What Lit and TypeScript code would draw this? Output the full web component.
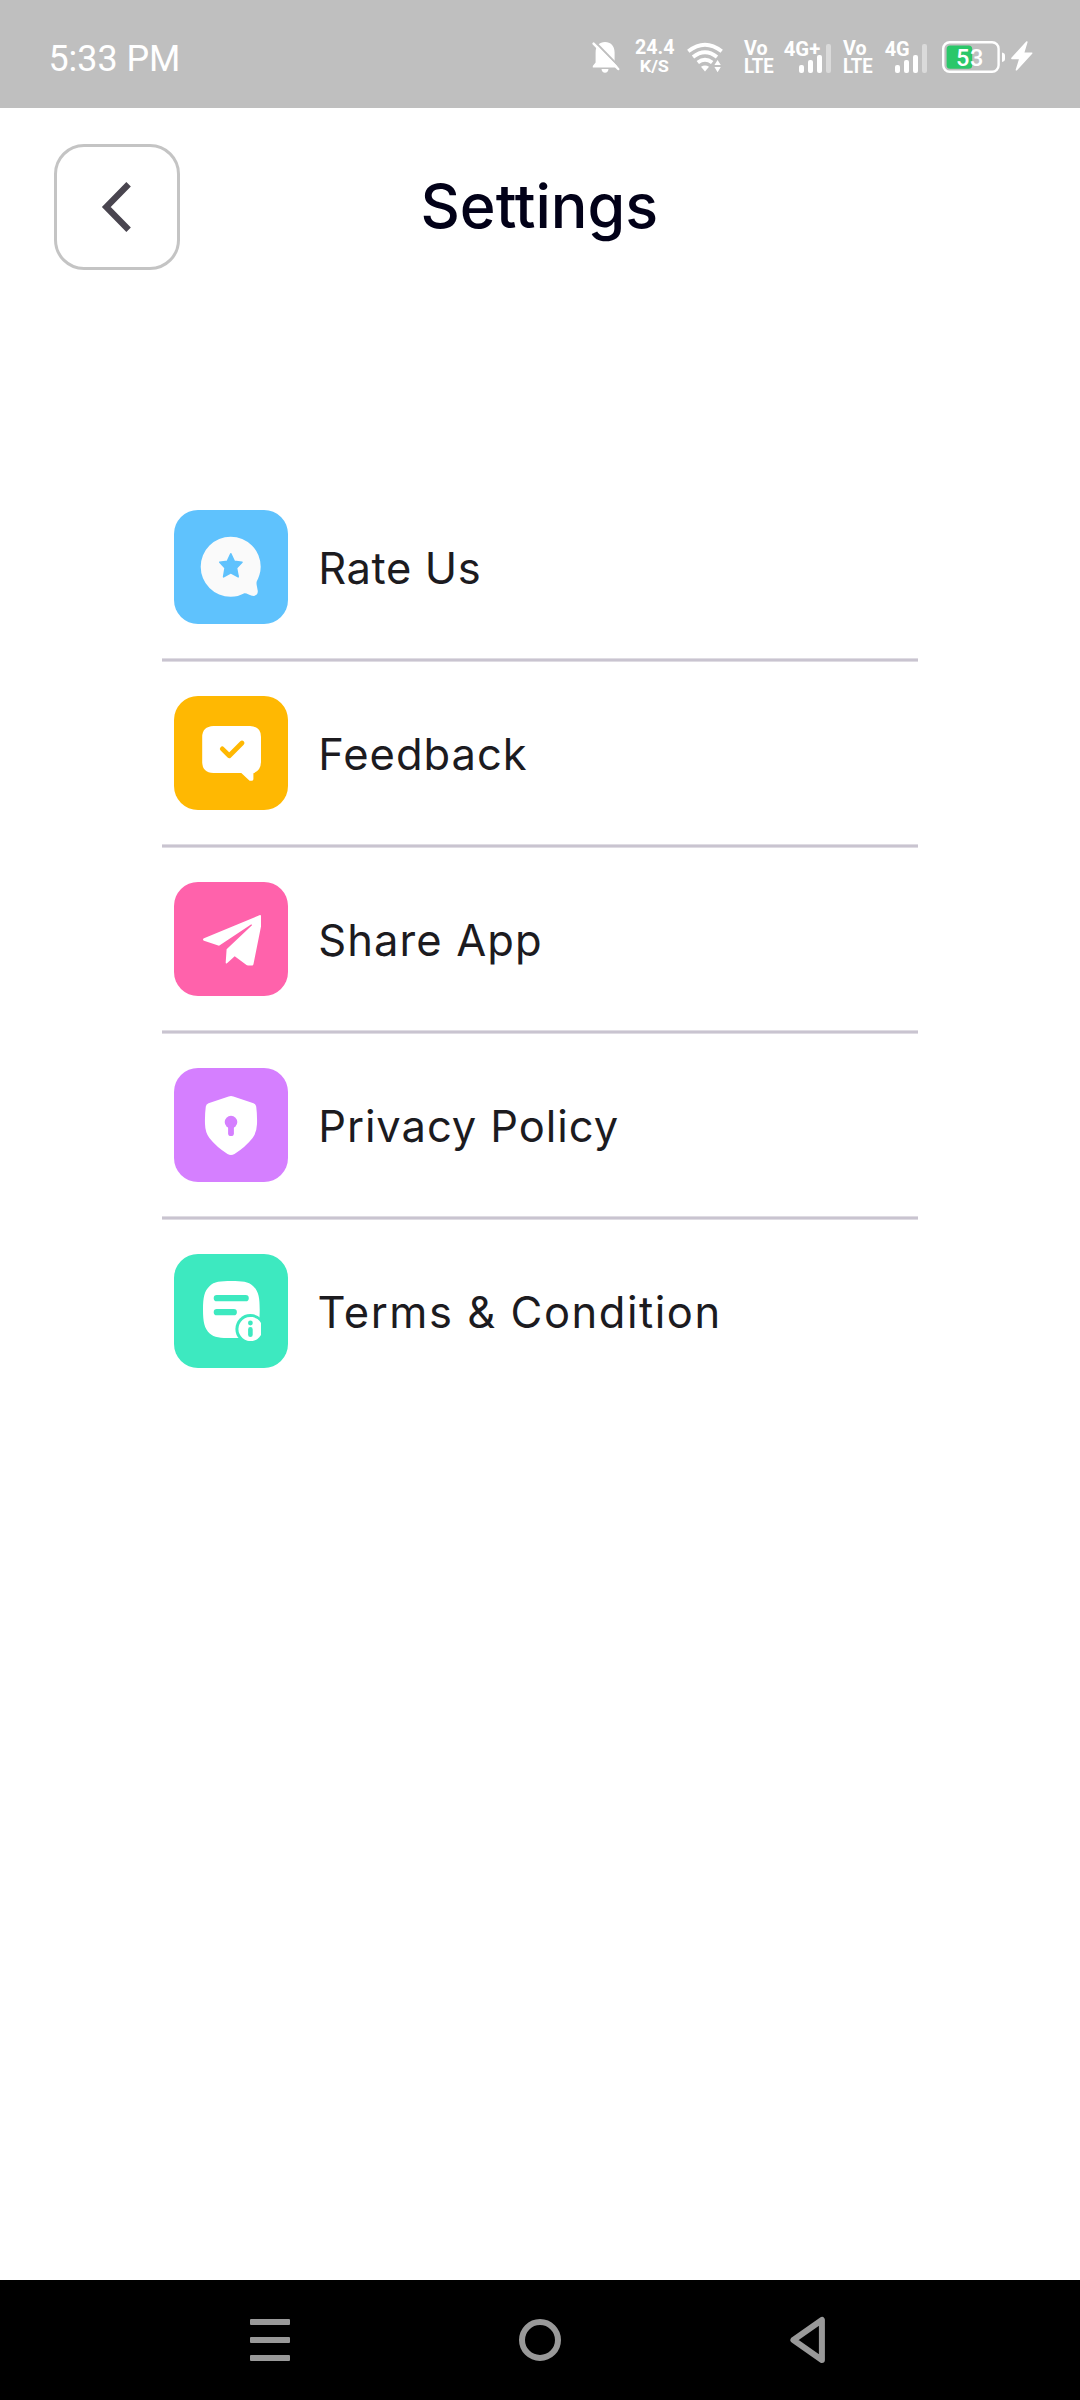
import { LitElement, html, svg, css } from "lit";
import { customElement } from "lit/decorators.js";

/* Signal strength glyph: three filled bars and one faded bar. */
const bars = (x: number) => svg`
  <rect x=${x} y="65" width="5" height="8" rx="2"/>
  <rect x=${x + 9} y="60" width="5" height="13" rx="2"/>
  <rect x=${x + 18} y="55" width="5" height="18" rx="2"/>
  <rect x=${x + 27} y="44" width="5" height="29" rx="2" fill="#dadada"/>`;

@customElement("status-bar")
class StatusBar extends LitElement {
  static styles = css`
    :host { display: flex; height: 108px; background: #bfbfbf; justify-content: space-between;
      padding: 0 40px 0 48px; box-sizing: border-box; }
    svg { display: block; height: 108px; fill: #fff; font-family: Roboto, sans-serif; }
    .icons { display: flex; }
  `;
  render() {
    return html`
      <svg width="140" viewBox="48 0 140 108">
        <text x="48.4" y="71" font-size="36" textLength="132" lengthAdjust="spacingAndGlyphs">5:33 PM</text>
      </svg>
      <div class="icons">
        <svg width="40" viewBox="590 0 40 108">
          <path d="M592.8 67.6V66L595.6 62.6V52.5C595.6 45.8 599.6 42 605 42C610.6 42 614.6 45.8 614.6 52.5V62.6L617.4 66V67.6Z"/>
          <path d="M601.5 69H608.5Q608 72.8 605 72.8Q602 72.8 601.5 69Z"/>
          <path d="M595.4 42.2L621 68.4" stroke="#bfbfbf" stroke-width="2"/>
          <path d="M593.6 43.6L618.2 69" stroke="#fff" stroke-width="2.5" stroke-linecap="round"/>
        </svg>
        <svg width="52" viewBox="630 0 52 108" font-weight="700">
          <text x="635" y="54" font-size="20.5" textLength="39.5" lengthAdjust="spacingAndGlyphs">24.4</text>
          <text x="639.7" y="72.3" font-size="17" textLength="29.3" lengthAdjust="spacingAndGlyphs">K/S</text>
        </svg>
        <svg width="56" viewBox="682 0 56 108">
          <g fill="none" stroke="#fff" stroke-width="3.8">
            <path d="M688.3 51.3Q705 38.2 721.7 51.3"/>
            <path d="M693 57Q705 47.6 717 57"/>
            <path d="M697.8 62.6Q705 56.8 712.2 62.6"/>
          </g>
          <path d="M701 66.8Q705 64 709 66.8L705 71.4Z"/>
          <path d="M714.4 65L717.6 60L720.8 65ZM714.4 67L717.6 72.3L720.8 67Z"/>
        </svg>
        <svg width="42" viewBox="738 0 42 108" font-size="19.5" font-weight="700">
          <text x="744" y="55" textLength="23.5" lengthAdjust="spacingAndGlyphs">Vo</text>
          <text x="743.9" y="73" textLength="29.8" lengthAdjust="spacingAndGlyphs">LTE</text>
        </svg>
        <svg width="58" viewBox="780 0 58 108" font-size="20.5" font-weight="700">
          <text x="783.7" y="56.4" textLength="36.5" lengthAdjust="spacingAndGlyphs">4G+</text>
          ${bars(799)}
        </svg>
        <svg width="42" viewBox="838 0 42 108" font-size="19.5" font-weight="700">
          <text x="843" y="55" textLength="23.5" lengthAdjust="spacingAndGlyphs">Vo</text>
          <text x="842.9" y="73" textLength="29.8" lengthAdjust="spacingAndGlyphs">LTE</text>
        </svg>
        <svg width="56" viewBox="880 0 56 108" font-size="20.5" font-weight="700">
          <text x="884.7" y="56.4" textLength="25" lengthAdjust="spacingAndGlyphs">4G</text>
          ${bars(895)}
        </svg>
        <svg width="72" viewBox="936 0 72 108">
          <rect x="943.2" y="42.2" width="55.4" height="29.6" rx="6.5" fill="none" stroke="#fff" stroke-width="2.4"/>
          <rect x="946.6" y="45.4" width="25.6" height="23.4" rx="3.5" fill="#2ac769"/>
          <path d="M1002 52.5Q1005 53.2 1005 55.5V59Q1005 61.4 1002 62Z"/>
          <text x="956" y="65.6" font-size="23.5" font-weight="500" textLength="27.4">53</text>
        </svg>
        <svg width="32" viewBox="1008 0 32 108">
          <path d="M1026.8 42L1012 58.4H1020L1016.5 69.8L1031.6 53.2H1023.4Z" stroke="#fff" stroke-width="1.6" stroke-linejoin="round"/>
        </svg>
      </div>`;
  }
}

@customElement("page-header")
class PageHeader extends LitElement {
  static styles = css`
    :host { display: grid; grid-template-columns: 126px 1fr 126px; padding: 36px 54px 0; height: 126px; }
    .back { box-sizing: border-box; width: 126px; height: 126px; padding: 0; border: 3px solid #c4c4c4;
      border-radius: 30px; background: #fff; display: flex; align-items: center; justify-content: center; }
    .title { justify-self: center; display: block; font-family: Inter, sans-serif; font-weight: 550; }
  `;
  render() {
    return html`
      <button class="back" aria-label="Back">
        <svg width="120" height="120" viewBox="57 147 120 120">
          <path d="M128.6 184.3L106.3 207L128.6 229.7" fill="none" stroke="#49454f" stroke-width="6.3"/>
        </svg>
      </button>
      <svg class="title" width="300" height="126" viewBox="390 144 300 126">
        <text x="420.5" y="228.3" font-size="61" fill="#020118"
          textLength="237.5" lengthAdjust="spacing">Settings</text>
      </svg>`;
  }
}

/* Icons share a 114-unit square, the size of the tile they sit on. */
const items = [
  { label: "Rate Us", tint: "#5fc2fd", x: 318.2, width: 162.5, icon: svg`
    <path fill="#fafafa" d="M56.7 26.7A30 30 0 0 1 86.7 56.7C86.7 63 84.5 67.6 82.8 71.3C82 74 83 76 83.7 80.5C84.3 84.4 81.8 86.4 78 85.8C74.5 85 72.5 82.6 69.8 83.4C66 85.4 62 86.7 56.7 86.7A30 30 0 0 1 56.7 26.7Z"/>
    <path fill="#5fc2fd" stroke="#5fc2fd" stroke-width="1.6" stroke-linejoin="round" d="M56.8 43.8L60.3 51.3L68 52.2L62.5 58L64.2 66.8L56.8 62.8L49.6 66.8L51.1 58L45.8 52.2L53.3 51.3Z"/>` },
  { label: "Feedback", tint: "#ffb802", x: 318.2, width: 208.5, icon: svg`
    <path fill="#fff" d="M39.5 30H76Q87 30.5 87 41V65.5Q87 74.5 79.4 77.2V83.3Q79.2 84.8 77.6 84.8H75.6L67.3 77H39.5Q28.2 76.5 28.2 66V41Q28.2 30.5 39.5 30Z"/>
    <path fill="none" stroke="#ffb802" stroke-width="4.8" stroke-linecap="round" stroke-linejoin="round" d="M48.3 52.9L55.3 59.7L68 47"/>` },
  { label: "Share App", tint: "#ff62ab", x: 318.2, width: 223.5, icon: svg`
    <path fill="#fff" d="M86 33.1Q87 33 87 34V44.5L79.5 82Q79.3 83.6 78 83.6H74Q73 83.4 72.5 83L60.7 74.3L53 81.2Q51.7 82 51.7 80.6L52.6 67.3L78 43.2Q78.2 42.2 77 42.6L45 63.8L30 58.7Q28 57.3 30 56.2Z"/>` },
  { label: "Privacy Policy", tint: "#d57fff", x: 318.2, width: 300, icon: svg`
    <path fill="#fff" d="M54.6 28.4Q57 27.5 59.4 28.4L79.5 35.2Q81.8 36.2 82.2 38.6Q83.3 47 83 56Q82.8 64.5 78.6 70Q71.5 79 60.5 86Q57 87.8 53.5 86Q42.5 79 35.4 70Q31.2 64.5 31 56Q30.7 47 31.8 38.6Q32.2 36.2 34.5 35.2Z"/>
    <circle cx="57" cy="54.1" r="6.3" fill="#d57fff"/>
    <path stroke="#d57fff" stroke-width="5.8" stroke-linecap="round" d="M57 56V65.2"/>` },
  { label: "Terms & Condition", tint: "#3de9c0", x: 317.6, width: 402.6, icon: svg`
    <path fill="#fff" d="M57.4 27C68 27 74.5 27.6 79 32C84.5 37 85.7 43 85.7 55.5C85.7 68 84.5 75 79 79.4C74.5 83.6 68 84 57.4 84C46.5 84 40 83.4 35.7 79.4C30.4 74.5 29 68 29 55.5C29 43 30.4 37 35.7 32C40 27.6 46.5 27 57.4 27Z"/>
    <path stroke="#3de9c0" stroke-width="6.2" stroke-linecap="round" d="M42.8 44.2H71.7M42.8 58.2H59.8"/>
    <circle cx="76.4" cy="75" r="15" fill="#3de9c0"/>
    <path fill="#fff" d="M87 69V81A12.1 12.1 0 1 1 87 69Z"/>
    <circle cx="76.4" cy="69" r="2.4" fill="#3de9c0"/>
    <path stroke="#3de9c0" stroke-width="4.6" stroke-linecap="round" d="M76.4 75.4V80.8"/>` },
];

@customElement("settings-list")
class SettingsList extends LitElement {
  static styles = css`
    :host { display: flex; flex-direction: column; padding: 240px 162px 0; }
    .row { display: flex; align-items: center; height: 114px; padding-left: 12px; gap: 24px; }
    .tile { width: 114px; height: 114px; border-radius: 24px; flex: none; display: flex; }
    .line { height: 2px; margin: 34px 0; background: #c9c4d0;
      border-top: 1px solid #dfdce3; border-bottom: 1px solid #dfdce3; }
    .label { display: block; font-family: Inter, sans-serif; font-size: 43.5px; font-weight: 370; fill: #1c1b1f; }
  `;
  render() {
    return items.map((it, i) => html`
      ${i ? html`<div class="line"></div>` : null}
      <div class="row">
        <div class="tile" style="background:${it.tint}">
          <svg width="114" height="114" viewBox="0 0 114 114" fill="none">${it.icon}</svg>
        </div>
        <svg class="label" width="450" height="114" viewBox="312 0 450 114">
          <text x=${it.x} y="74.2" textLength=${it.width} lengthAdjust="spacing">${it.label}</text>
        </svg>
      </div>`);
  }
}

@customElement("nav-bar")
class NavBar extends LitElement {
  static styles = css`
    :host { display: flex; height: 120px; background: #000; justify-content: space-between; padding: 0 240px; }
    svg { display: block; }
  `;
  render() {
    return html`
      <svg width="60" height="120" viewBox="240 0 60 120" fill="#999">
        <rect x="250" y="39" width="40" height="6" rx="1"/>
        <rect x="250" y="57" width="40" height="6" rx="1"/>
        <rect x="250" y="75" width="40" height="6" rx="1"/>
      </svg>
      <svg width="60" height="120" viewBox="510 0 60 120" fill="none" stroke="#999" stroke-width="6">
        <circle cx="540" cy="60" r="18"/>
      </svg>
      <svg width="60" height="120" viewBox="780 0 60 120" fill="none" stroke="#999" stroke-width="6" stroke-linejoin="round">
        <path d="M793.4 60L821.9 40V80Z"/>
      </svg>`;
  }
}

@customElement("app-root")
class AppRoot extends LitElement {
  static styles = css`
    :host { display: flex; flex-direction: column; width: 1080px; height: 2400px; background: #fff; overflow: hidden; }
    .content { flex: 1; }
  `;
  render() {
    return html`
      <status-bar></status-bar>
      <page-header></page-header>
      <settings-list class="content"></settings-list>
      <nav-bar></nav-bar>`;
  }
}
